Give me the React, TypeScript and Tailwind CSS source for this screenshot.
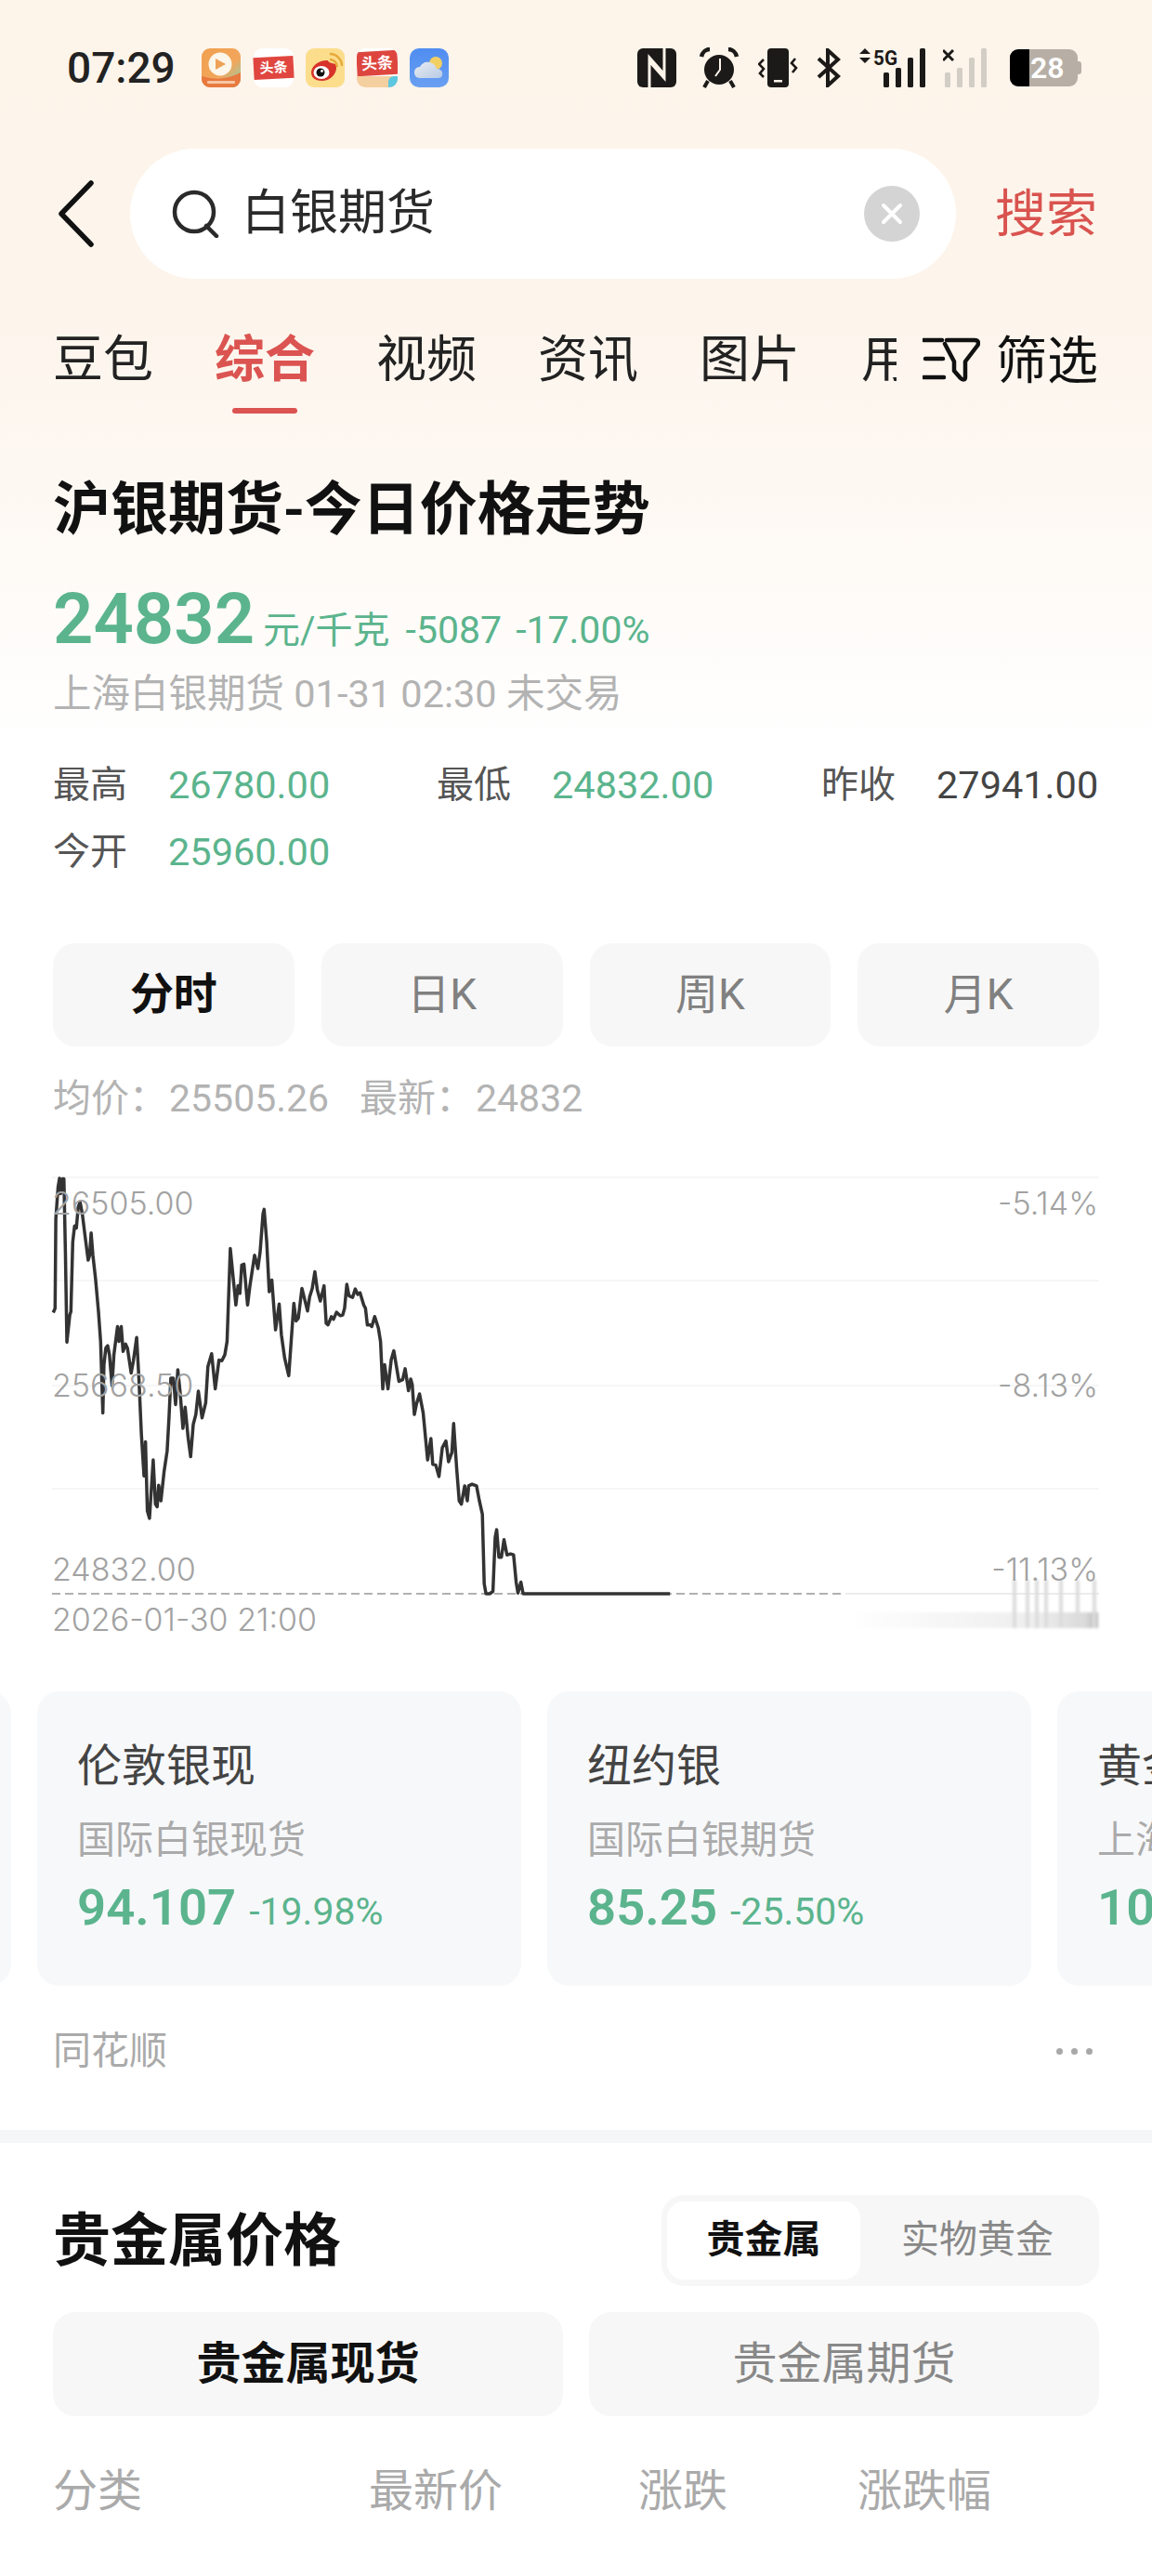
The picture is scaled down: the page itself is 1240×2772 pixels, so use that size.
import React from 'react';

const GREEN = 'text-[#5bb48d]';

// 分时线，坐标取自截图，换算后相对图表顶部
const rawLine: [number, number][] = [
  [145,483],[150,470],[152,200],[158,105],[162,78],[165,125],[170,80],[174,80],[178,300],[182,572],[190,490],[193,480],[198,270],[203,222],[208,228],[213,165],[218,150],[224,185],[232,255],[240,325],[244,310],[248,243],[253,310],[260,380],[268,480],[274,570],[280,785],[283,640],[288,590],[293,583],[298,610],[305,703],[310,610],[320,525],[324,570],[330,525],[335,600],[342,578],[347,590],[357,665],[363,630],[372,558],[378,680],[385,850],[392,975],[396,872],[401,1080],[407,1103],[417,927],[423,1060],[428,1068],[432,1003],[438,1050],[447,960],[455,900],[460,800],[465,680],[472,680],[478,760],[484,655],[490,720],[498,832],[504,768],[512,860],[519,917],[526,820],[533,790],[540,720],[550,800],[560,755],[566,645],[576,607],[586,713],[596,626],[604,628],[612,610],[618,570],[627,290],[642,460],[648,402],[653,425],[658,340],[664,337],[674,460],[680,405],[693,310],[702,350],[708,300],[716,185],[719,172],[726,270],[733,420],[740,385],[750,535],[760,457],[766,550],[775,620],[786,673],[800,455],[806,508],[812,500],[822,410],[837,478],[843,435],[850,410],[857,360],[864,415],[872,448],[882,402],[888,515],[893,520],[902,495],[908,503],[916,482],[926,492],[933,490],[938,470],[944,398],[950,432],[960,437],[967,412],[974,428],[980,423],[990,460],[995,470],[1000,520],[1008,520],[1012,525],[1020,495],[1030,530],[1036,570],[1042,713],[1047,640],[1056,713],[1065,625],[1072,598],[1086,690],[1096,685],[1103,652],[1112,718],[1118,683],[1122,700],[1128,790],[1134,757],[1142,728],[1152,785],[1164,927],[1173,862],[1178,940],[1186,942],[1195,977],[1204,890],[1214,870],[1221,932],[1230,905],[1235,817],[1243,950],[1250,1050],[1256,1060],[1265,1005],[1272,1050],[1276,1005],[1285,1000],[1297,1005],[1305,1050],[1313,1090],[1318,1300],[1323,1330],[1333,1330],[1342,1323],[1348,1160],[1352,1137],[1358,1220],[1365,1220],[1372,1167],[1380,1213],[1390,1210],[1398,1213],[1405,1295],[1410,1328],[1418,1295],[1424,1330],[1824,1330],
];
const linePoints = rawLine.map(([x, y]) => `${(x / 2.529).toFixed(1)},${(y / 2.8).toFixed(1)}`).join(' ');

const AppIcons = () => (
  <div className="flex items-center ml-[28px]">
    {/* 短视频 */}
    <svg width="42" height="42" viewBox="0 0 42 42">
      <defs>
        <linearGradient id="a1" x1="0" y1="0" x2="1" y2="1">
          <stop offset="0" stopColor="#f0a04e" />
          <stop offset="0.6" stopColor="#f2a65c" />
          <stop offset="1" stopColor="#7fd6bb" />
        </linearGradient>
      </defs>
      <rect width="42" height="42" rx="9" fill="url(#a1)" />
      <path d="M0 30 C14 34 28 34 42 26 V33 A9 9 0 0 1 33 42 H9 A9 9 0 0 1 0 33 Z" fill="#e8793f" />
      <circle cx="20" cy="17" r="12.5" fill="#fdf6ea" />
      <path d="M15 11 L26 17 L15 23 Z" fill="#eda257" />
      <rect x="6" y="35" width="30" height="3" rx="1" fill="#f6c7a4" />
    </svg>
    <div className="ml-[14px] w-[43px] h-[42px] rounded-[9px] bg-white flex items-center justify-center">
      <div className="w-[43px] h-[24px] bg-[#e0463f] -rotate-3 flex items-center justify-center text-white text-[15px] font-bold leading-none">头条</div>
    </div>
    {/* 微博 */}
    <svg className="ml-[13px]" width="42" height="42" viewBox="0 0 42 42">
      <rect width="42" height="42" rx="9" fill="#fbdd8c" />
      <path d="M6 26 C6 18 16 12 24 13 C24 15 28 16 32 17 C36 24 28 35 18 35 C11 35 6 32 6 26 Z" fill="#d8332a" />
      <ellipse cx="17" cy="26" rx="8.5" ry="7" fill="#fff" />
      <circle cx="16" cy="26" r="4.5" fill="#111" />
      <circle cx="17.5" cy="24.5" r="1.4" fill="#fff" />
      <path d="M26 12 A8 8 0 0 1 34 20 M26 6 A13 13 0 0 1 39 19" fill="none" stroke="#e6a93a" strokeWidth="2.4" />
    </svg>
    <div className="ml-[13px] relative w-[44px] h-[42px] rounded-[9px] bg-white overflow-hidden">
      <div className="absolute left-0 top-[3px] w-[44px] h-[26px] bg-[#dd463f] -rotate-3 flex items-center justify-center text-white text-[17px] font-bold leading-none">头条</div>
      <div className="absolute left-0 bottom-0 w-[44px] h-[12px] bg-[#f4cf9f]" />
      <div className="absolute right-0 bottom-0 w-[10px] h-[12px] rounded-tl-[6px] bg-[#5cc7e0]" />
    </div>
    {/* 天气 */}
    <svg className="ml-[13px]" width="42" height="42" viewBox="0 0 42 42">
      <defs>
        <linearGradient id="a5" x1="0" y1="0" x2="0" y2="1">
          <stop offset="0" stopColor="#4f8df0" />
          <stop offset="1" stopColor="#6a9ff2" />
        </linearGradient>
        <linearGradient id="a6" x1="0" y1="0" x2="1" y2="1">
          <stop offset="0" stopColor="#e8ecf0" />
          <stop offset="1" stopColor="#b9cbe6" />
        </linearGradient>
      </defs>
      <rect width="42" height="42" rx="10" fill="url(#a5)" />
      <circle cx="28" cy="16" r="7" fill="#f2cf63" />
      <path d="M11 32 C7 32 5 29 5 26 C5 22 8 20 11 20 C13 16 17 14 21 15 C26 16 28 19 29 22 C33 22 36 25 35 28 C35 31 33 32 30 32 Z" fill="url(#a6)" />
    </svg>
  </div>
);

const StatusRight = () => (
  <div className="flex items-center ml-auto">
    {/* NFC */}
    <svg width="42" height="42" viewBox="0 0 42 42">
      <rect width="42" height="42" rx="6" fill="#1c1a18" />
      <path d="M13 42 V10 L29 28 M29 0 V32 L13 14" fill="none" stroke="#fdf4ea" strokeWidth="3" />
    </svg>
    {/* 闹钟 */}
    <svg className="ml-[24px]" width="44" height="44" viewBox="0 0 44 44">
      <circle cx="22" cy="24" r="16" fill="#1c1a18" />
      <path d="M3 10 C4 5 8 2 12 2 M41 10 C40 5 36 2 32 2" fill="none" stroke="#1c1a18" strokeWidth="4.5" />
      <path d="M10 36 L6 43 M34 36 L38 43" stroke="#1c1a18" strokeWidth="4" />
      <path d="M23 12 V24 L18 31" fill="none" stroke="#fdf4ea" strokeWidth="2" />
    </svg>
    {/* 振动 */}
    <svg className="ml-[20px]" width="44" height="42" viewBox="0 0 44 42">
      <rect x="10" y="0" width="23" height="42" rx="4" fill="#1c1a18" />
      <rect x="17" y="34" width="9" height="2.5" fill="#fdf4ea" />
      <path d="M6 12 L1 17 L6 22 L2 27 L6 31" fill="none" stroke="#1c1a18" strokeWidth="2.6" />
      <path d="M40 11 L36 16 L41 21 L37 26" fill="none" stroke="#1c1a18" strokeWidth="2.6" />
    </svg>
    {/* 蓝牙 */}
    <svg className="ml-[19px]" width="26" height="42" viewBox="0 0 26 42">
      <path d="M2 11 L23 30 L12 40 V2 L23 12 L2 31" fill="none" stroke="#1c1a18" strokeWidth="4" />
    </svg>
    {/* 5G */}
    <svg className="ml-[20px]" width="71" height="42" viewBox="0 0 71 42">
      <path d="M6 0 L12 6 H0 Z M6 16 L12 10 H0 Z" fill="#1c1a18" />
      <text x="15" y="18" fontSize="22" fontWeight="700" fill="#1c1a18" fontFamily="Roboto" textLength="26" lengthAdjust="spacingAndGlyphs">5G</text>
      <rect x="26" y="26" width="6" height="16" rx="1.5" fill="#1c1a18" />
      <rect x="39" y="21" width="6" height="21" rx="1.5" fill="#1c1a18" />
      <rect x="52" y="10" width="6" height="32" rx="1.5" fill="#1c1a18" />
      <rect x="65" y="0" width="6" height="42" rx="1.5" fill="#1c1a18" />
    </svg>
    {/* 副卡信号 */}
    <svg className="ml-[19px]" width="48" height="42" viewBox="0 0 48 42">
      <path d="M0 2 L11 13 M11 2 L0 13" stroke="#1c1a18" strokeWidth="3" />
      <rect x="2" y="26" width="6" height="16" rx="1.5" fill="#d2cdc5" />
      <rect x="15" y="21" width="6" height="21" rx="1.5" fill="#d2cdc5" />
      <rect x="28" y="10" width="6" height="32" rx="1.5" fill="#d2cdc5" />
      <rect x="41" y="0" width="6" height="42" rx="1.5" fill="#d2cdc5" />
    </svg>
    {/* 电量 */}
    <div className="relative ml-[24px] mr-[76px] w-[77px] h-[40px] flex items-center">
      <div className="w-[73px] h-[40px] rounded-[9px] bg-[#b7afa6] overflow-hidden">
        <div className="w-[21px] h-[40px] bg-black" />
      </div>
      <div className="w-[4px] h-[14px] rounded-r-[3px] bg-[#b7afa6]" />
      <div className="absolute left-[22px] top-0 h-[40px] flex items-center text-white text-[32px] font-semibold leading-none">28</div>
    </div>
  </div>
);

const SearchBar = () => (
  <div className="flex items-center h-[140px] mt-[14px]">
    <svg className="ml-[60px]" width="44" height="72" viewBox="0 0 44 72">
      <path d="M38 3 L6 36 L38 69" fill="none" stroke="#111" strokeWidth="5.5" strokeLinecap="round" strokeLinejoin="round" />
    </svg>
    <div className="ml-[36px] w-[889px] h-[140px] rounded-full bg-white flex items-center">
      <svg className="ml-[44px]" width="52" height="52" viewBox="0 0 52 52">
        <circle cx="25" cy="24" r="21" fill="none" stroke="#2a2a2a" strokeWidth="4.5" />
        <path d="M38 39 L49 50" stroke="#2a2a2a" strokeWidth="4.5" strokeLinecap="round" />
      </svg>
      <div className="ml-[24px] text-[52px] leading-none text-[#2a2a2a]">白银期货</div>
      <div className="ml-auto mr-[39px] w-[60px] h-[60px] rounded-full bg-[#d4d4d4] flex items-center justify-center">
        <svg width="28" height="28" viewBox="0 0 28 28">
          <path d="M5 5 L23 23 M23 5 L5 23" stroke="#fff" strokeWidth="4" strokeLinecap="round" />
        </svg>
      </div>
    </div>
    <div className="ml-[42px] text-[55px] leading-none text-[#d9534f]">搜索</div>
  </div>
);

const NavTabs = () => (
  <div className="relative flex items-start h-[97px] mt-[48px] pl-[57px]">
    <div className="flex gap-[66px] w-[908px] overflow-hidden">
      {['豆包', '综合', '视频', '资讯', '图片', '用户'].map((t) => (
        <div key={t} className="shrink-0 flex flex-col items-center">
          <div className={t === '综合' ? 'text-[54px] leading-[80px] font-bold text-[#db5451]' : 'text-[54px] leading-[80px] text-[#222]'}>{t}</div>
          <div className={t === '综合' ? 'mt-[11px] w-[70px] h-[6px] rounded-[3px] bg-[#db5451]' : 'mt-[11px] h-[6px]'} />
        </div>
      ))}
    </div>
    <svg className="ml-[28px] mt-[14px]" width="62" height="50" viewBox="0 0 62 50">
      <path d="M26 4 H56 C60 4 61 7 59 10 L46 27 V44 C46 47 43 47 41 45 L34 37 V27 L24 8 M1 4 H21 M3 24 H22 M1 44 H23" fill="none" stroke="#111" strokeWidth="4.5" strokeLinecap="round" strokeLinejoin="round" />
    </svg>
    <div className="ml-[17px] text-[55px] leading-[80px] text-[#111]">筛选</div>
  </div>
);

const Stat = ({ label, value, green = true }: { label: string; value: string; green?: boolean }) => (
  <div className="flex items-center h-[72px]">
    <div className="w-[124px] text-[40px] text-[#555]">{label}</div>
    <div className={green ? `text-[41.5px] ${GREEN}` : 'text-[41.5px] text-[#444]'}>{value}</div>
  </div>
);

const Quote = () => (
  <div className="pl-[57px] pr-[57px]">
    <div className="mt-[64px] text-[62px] leading-[80px] font-semibold text-[#111]">沪银期货-今日价格走势</div>
    <div className={`mt-[37px] h-[80px] flex items-baseline leading-[80px] ${GREEN}`}>
      <span className="text-[76px] font-semibold">24832</span>
      <span className="ml-[9px] text-[40px]">元/千克</span>
      <span className="ml-[17px] text-[41px]">-5087</span>
      <span className="ml-[15px] text-[41px]">-17.00%</span>
    </div>
    <div className="mt-[16px] text-[41.5px] leading-[50px] text-[#b3b3b3]">上海白银期货 01-31 02:30 未交易</div>
    <div className="mt-[37px] grid grid-cols-[413px_414px_1fr]">
      <Stat label="最高" value="26780.00" />
      <Stat label="最低" value="24832.00" />
      <Stat label="昨收" value="27941.00" green={false} />
      <Stat label="今开" value="25960.00" />
    </div>
    <div className="mt-[62px] grid grid-cols-4 gap-[29px]">
      {['分时', '日K', '周K', '月K'].map((t, i) => (
        <div
          key={t}
          className={
            i === 0
              ? 'h-[111px] rounded-[24px] bg-[#f7f7f7] flex items-center justify-center text-[47px] font-semibold text-[#111]'
              : 'h-[111px] rounded-[24px] bg-[#f7f7f7] flex items-center justify-center text-[46px] text-[#808080]'
          }
        >
          {t}
        </div>
      ))}
    </div>
    <div className="mt-[31px] flex text-[41px] leading-[50px] text-[#b3b3b3]">
      <span className="w-[125px]">均价：</span>
      <span className="w-[205px]">25505.26</span>
      <span className="w-[125px]">最新：</span>
      <span>24832</span>
    </div>
  </div>
);

const chartLabel = 'absolute font-[Inter,sans-serif] font-light text-[34px] leading-none text-[#a2a2a2]';

const Chart = () => (
  <div className="relative mt-[33px] h-[560px]">
    <svg className="absolute inset-0" width="1240" height="560" viewBox="0 0 1240 560">
      <defs>
        <linearGradient id="fuzz" x1="0" y1="0" x2="1" y2="0">
          <stop offset="0" stopColor="#fff" />
          <stop offset="0.75" stopColor="#eeeeee" />
          <stop offset="0.95" stopColor="#dadada" />
          <stop offset="1" stopColor="#b5b5b5" />
        </linearGradient>
        <filter id="soft"><feGaussianBlur stdDeviation="1.5" /></filter>
      </defs>
      {[27, 138, 251, 362].map((y) => (
        <line key={y} x1="56" x2="1183" y1={y} y2={y} stroke="#f6f6f6" strokeWidth="2" />
      ))}
      <line x1="56" x2="905" y1="475" y2="475" stroke="#b0b0b0" strokeWidth="2" strokeDasharray="9 5" />
      <line x1="910" x2="1183" y1="475" y2="475" stroke="#ececec" strokeWidth="2" />
      <polyline points={linePoints} fill="none" stroke="#333" strokeWidth="3.5" strokeLinejoin="round" />
      <g filter="url(#soft)">
        <rect x="910" y="495" width="272" height="17" fill="url(#fuzz)" />
        {[1092, 1106, 1116, 1126, 1142, 1160, 1178].map((x) => (
          <rect key={x} x={x - 2} y="460" width="4" height="52" fill="#dcdcdc" />
        ))}
      </g>
    </svg>
    <div className={`${chartLabel} left-[56px] top-[38px]`}>26505.00</div>
    <div className={`${chartLabel} left-[56px] top-[234px]`}>25668.50</div>
    <div className={`${chartLabel} left-[56px] top-[432px]`}>24832.00</div>
    <div className={`${chartLabel} left-[56px] top-[486px] text-[33px]`}>2026-01-30 21:00</div>
    <div className={`${chartLabel} right-[58px] top-[38px]`}>-5.14%</div>
    <div className={`${chartLabel} right-[58px] top-[234px]`}>-8.13%</div>
    <div className={`${chartLabel} right-[58px] top-[432px]`}>-11.13%</div>
  </div>
);

const cards = [
  { name: '伦敦银现', sub: '国际白银现货', price: '94.107', pct: '-19.98%' },
  { name: '纽约银', sub: '国际白银期货', price: '85.25', pct: '-25.50%' },
  { name: '黄金期货', sub: '上海黄金期货', price: '1000.00', pct: '-8.00%' },
];

const Cards = () => (
  <div className="mt-[20px] flex gap-[28px] ml-[-509px]">
    <div className="shrink-0 w-[521px] h-[317px] rounded-[24px] bg-[#f7f8fa]" />
    {cards.map((c) => (
      <div key={c.name} className="shrink-0 w-[521px] h-[317px] rounded-[24px] bg-[#f7f8fa] pl-[43px] pt-[51px]">
        <div className="text-[48px] leading-[60px] text-[#444] whitespace-nowrap">{c.name}</div>
        <div className="mt-[24px] text-[41px] leading-[50px] text-[#aaa] whitespace-nowrap">{c.sub}</div>
        <div className={`mt-[17px] flex items-baseline leading-[60px] whitespace-nowrap ${GREEN}`}>
          <span className="text-[54.5px] font-semibold">{c.price}</span>
          <span className="ml-[14px] text-[41px]">{c.pct}</span>
        </div>
      </div>
    ))}
  </div>
);

const Metals = () => (
  <div className="pl-[57px] pr-[57px]">
    <div className="mt-[56px] flex items-center justify-between h-[98px]">
      <div className="text-[62px] font-bold text-[#111]">贵金属价格</div>
      <div className="w-[471px] h-[98px] rounded-[24px] bg-[#f7f7f7] flex items-center pl-[6px]">
        <div className="w-[208px] h-[84px] rounded-[18px] bg-white flex items-center justify-center text-[41px] font-bold text-[#111]">贵金属</div>
        <div className="ml-[44px] text-[41px] text-[#888]">实物黄金</div>
      </div>
    </div>
    <div className="mt-[28px] grid grid-cols-2 gap-[28px]">
      <div className="h-[112px] rounded-[24px] bg-[#f7f7f7] flex items-center justify-center text-[48px] font-bold text-[#111]">贵金属现货</div>
      <div className="h-[112px] rounded-[24px] bg-[#f7f7f7] flex items-center justify-center text-[48px] text-[#888]">贵金属期货</div>
    </div>
    <div className="mt-[51px] grid grid-cols-[340px_290px_236px_1fr] text-[48px] leading-[60px] text-[#aaa]">
      <div>分类</div>
      <div>最新价</div>
      <div>涨跌</div>
      <div>涨跌幅</div>
    </div>
  </div>
);

export default function App() {
  return (
    <div className="w-[1240px] h-[2772px] overflow-hidden bg-[linear-gradient(to_bottom,#fdf4ea_0px,#fdf5ec_340px,#fef9f4_560px,#ffffff_800px)] font-[Roboto,'Noto_Sans_CJK_SC',sans-serif]">
      <div className="flex items-center h-[146px] pl-[72px]">
        <div className="text-[46px] font-medium leading-none text-[#222]">07:29</div>
        <AppIcons />
        <StatusRight />
      </div>
      <SearchBar />
      <NavTabs />
      <Quote />
      <Chart />
      <Cards />
      <div className="mt-[45px] pl-[57px] pr-[58px] flex items-center justify-between h-[50px]">
        <div className="text-[41px] leading-[50px] text-[#aaa]">同花顺</div>
        <div className="flex gap-[9px] mr-[6px]">
          <div className="w-[7px] h-[7px] rounded-full bg-[#a8a8a8]" />
          <div className="w-[7px] h-[7px] rounded-full bg-[#a8a8a8]" />
          <div className="w-[7px] h-[7px] rounded-full bg-[#a8a8a8]" />
        </div>
      </div>
      <div className="mt-[60px] h-[14px] bg-[#f5f6f8]" />
      <Metals />
    </div>
  );
}
